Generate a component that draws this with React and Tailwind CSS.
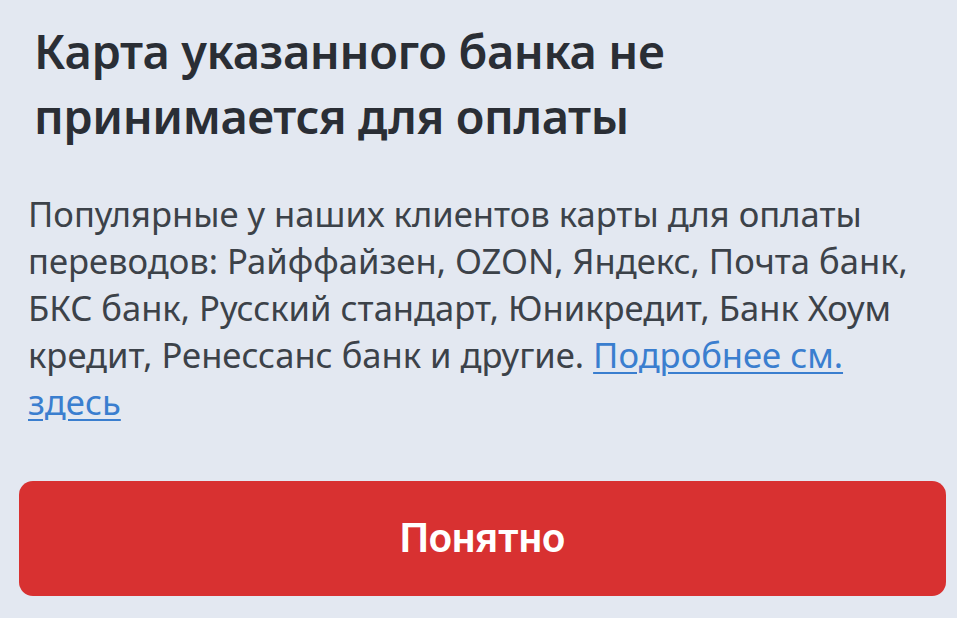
export default function App() {
  return (
    <div className="min-h-screen w-full bg-[#e3e8f1] flex flex-col pl-[19px] pr-[11px] pt-[19px]" style={{ fontFamily: '"Noto Sans", "Open Sans", sans-serif' }}>
      <h1 className="pl-[15px] text-[47px] leading-[65px] font-semibold tracking-[-0.4px] text-[#2a2e35]">
        Карта указанного банка не<br />принимается для оплаты
      </h1>
      <p className="mt-[41px] pl-[9px] text-[34.6px] leading-[47px] text-[#3c4249]">
        Популярные у наших клиентов карты для оплаты<br />
        переводов: Райффайзен, OZON, Яндекс, Почта банк,<br />
        БКС банк, Русский стандарт, Юникредит, Банк Хоум<br />
        кредит, Ренессанс банк и другие.{' '}
        <a href="#" className="text-[#3a7ecf] underline decoration-2 underline-offset-4">Подробнее см.<br />здесь</a>
      </p>
      <button className="mt-[56px] h-[115px] w-full rounded-[14px] bg-[#d83131] text-white text-[41px] font-semibold" style={{ fontFamily: 'Roboto, sans-serif' }}>
        Понятно
      </button>
    </div>
  );
}
